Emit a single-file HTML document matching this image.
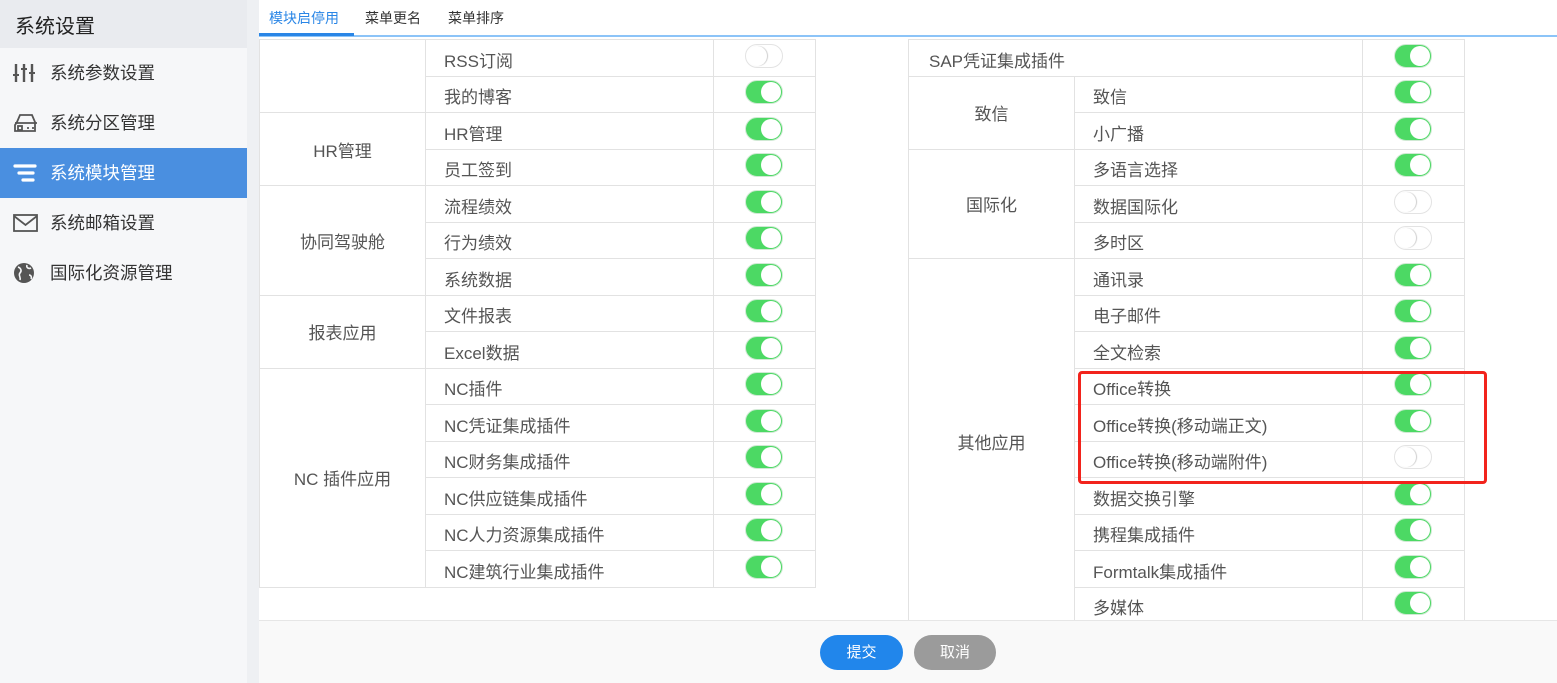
<!DOCTYPE html><html><head><meta charset="utf-8"><style>
*{box-sizing:border-box;margin:0;padding:0}
body{width:1557px;height:683px;overflow:hidden;font-family:"Liberation Sans","Noto Sans CJK SC",sans-serif;background:#eef0f3;position:relative}
.side{position:absolute;left:0;top:0;width:247px;height:683px;background:#f6f7f9}
.side .hd{height:48px;background:#e9ebef;font-size:20px;color:#222;padding:10px 0 0 15px}
.side .it{height:50px;font-size:17.5px;color:#333;padding-left:50px;line-height:50px;position:relative}
.side .it.on{background:#4a8fe0;color:#fff}
.side svg{position:absolute;left:13px;top:14px}
.main{position:absolute;left:259px;top:0;width:1298px;height:683px;background:#fff;overflow:hidden}
.tabs{height:37px;border-bottom:2px solid #8cc4f8;position:relative;font-size:14px;color:#333}
.tabs span{position:absolute;top:8px}
.tabs .a{color:#2a86e6}
.tabs .ul{position:absolute;left:0;top:33px;width:95px;height:3px;background:#2a86e6}
table{position:absolute;border-collapse:collapse;font-size:17px;color:#555;table-layout:fixed}
td{border:1px solid #e2e2e2;height:36.5px;padding:3px 0 0 18px;white-space:nowrap}
td.g{text-align:center;padding:0}
td.t{padding:0}
.sw{display:block;width:38px;height:24px;border-radius:12px;margin-left:31px;margin-top:-4px;background:#4cd964;position:relative;border:1px solid #cfe9d3}
.sw:after{content:"";position:absolute;right:1px;top:1px;width:20px;height:20px;border-radius:50%;background:#fff}
.sw.off{background:#fff;border:1px solid #e3e3e3}
.sw.off:after{left:1px;right:auto;box-shadow:1px 0 1px #ccc}
.foot{position:absolute;left:0;top:620px;width:1298px;height:63px;background:#f9f9f9;border-top:1px solid #e6e6e6;z-index:2}
.btn{position:absolute;top:14px;height:35px;width:83px;border-radius:18px;color:#fff;font-size:15px;text-align:center;line-height:35px}
.red{position:absolute;left:1078px;top:371px;width:409px;height:113px;border:3px solid #f2231c;border-radius:4px;z-index:3}
</style></head><body>
<div class="side">
<div class="hd">系统设置</div>
<div class="it"><svg width="24" height="22" viewBox="0 0 24 22" fill="none" stroke="#555" stroke-width="2.4"><path d="M3 2v18M11 2v18M19 2v18"/><path d="M0 13h6M8 7h6M16 11h6" stroke-width="2"/></svg>系统参数设置</div>
<div class="it"><svg width="26" height="22" viewBox="0 0 26 22" fill="none" stroke="#555" stroke-width="1.8"><path d="M4 10l3-7h12l3 7v9H2v-6z"/><path d="M2 11h22"/><rect x="5" y="14" width="4" height="4"/><path d="M14 16h2M19 16h2"/></svg>系统分区管理</div>
<div class="it on"><svg width="24" height="22" viewBox="0 0 24 22" stroke="#fff" stroke-width="3.2" stroke-linecap="round"><path d="M2 4h20M6 11h14M10 18h10"/></svg>系统模块管理</div>
<div class="it"><svg width="26" height="22" viewBox="0 0 26 22" fill="none" stroke="#555" stroke-width="1.8"><rect x="1" y="3" width="23" height="16"/><path d="M1 4l11.5 9L24 4"/></svg>系统邮箱设置</div>
<div class="it"><svg width="24" height="22" viewBox="0 0 24 22"><circle cx="11" cy="11" r="10" fill="#555"/><path d="M5 5c3 1 4 4 2 6s1 4 0 7M14 3c-1 3 2 4 4 3M16 13c2 0 3 2 2 4" stroke="#f6f7f9" stroke-width="1.6" fill="none"/></svg>国际化资源管理</div>
</div>
<div class="main">
<div class="tabs"><span class="a" style="left:10px">模块启停用</span><span style="left:106px">菜单更名</span><span style="left:189px">菜单排序</span><div class="ul"></div></div>
<table style="left:0;top:39px;width:556px"><colgroup><col style="width:166px"><col style="width:288px"><col style="width:102px"></colgroup>
<tr><td class="g" rowspan="2"></td><td>RSS订阅</td><td class="t"><i class="sw off"></i></td></tr>
<tr><td>我的博客</td><td class="t"><i class="sw"></i></td></tr>
<tr><td class="g" rowspan="2">HR管理</td><td>HR管理</td><td class="t"><i class="sw"></i></td></tr>
<tr><td>员工签到</td><td class="t"><i class="sw"></i></td></tr>
<tr><td class="g" rowspan="3">协同驾驶舱</td><td>流程绩效</td><td class="t"><i class="sw"></i></td></tr>
<tr><td>行为绩效</td><td class="t"><i class="sw"></i></td></tr>
<tr><td>系统数据</td><td class="t"><i class="sw"></i></td></tr>
<tr><td class="g" rowspan="2">报表应用</td><td>文件报表</td><td class="t"><i class="sw"></i></td></tr>
<tr><td>Excel数据</td><td class="t"><i class="sw"></i></td></tr>
<tr><td class="g" rowspan="6">NC 插件应用</td><td>NC插件</td><td class="t"><i class="sw"></i></td></tr>
<tr><td>NC凭证集成插件</td><td class="t"><i class="sw"></i></td></tr>
<tr><td>NC财务集成插件</td><td class="t"><i class="sw"></i></td></tr>
<tr><td>NC供应链集成插件</td><td class="t"><i class="sw"></i></td></tr>
<tr><td>NC人力资源集成插件</td><td class="t"><i class="sw"></i></td></tr>
<tr><td>NC建筑行业集成插件</td><td class="t"><i class="sw"></i></td></tr>
</table>
<table style="left:649px;top:39px;width:556px"><colgroup><col style="width:166px"><col style="width:288px"><col style="width:102px"></colgroup>
<tr><td colspan="2" style="padding-left:20px">SAP凭证集成插件</td><td class="t"><i class="sw"></i></td></tr>
<tr><td class="g" rowspan="2">致信</td><td>致信</td><td class="t"><i class="sw"></i></td></tr>
<tr><td>小广播</td><td class="t"><i class="sw"></i></td></tr>
<tr><td class="g" rowspan="3">国际化</td><td>多语言选择</td><td class="t"><i class="sw"></i></td></tr>
<tr><td>数据国际化</td><td class="t"><i class="sw off"></i></td></tr>
<tr><td>多时区</td><td class="t"><i class="sw off"></i></td></tr>
<tr><td class="g" rowspan="10">其他应用</td><td>通讯录</td><td class="t"><i class="sw"></i></td></tr>
<tr><td>电子邮件</td><td class="t"><i class="sw"></i></td></tr>
<tr><td>全文检索</td><td class="t"><i class="sw"></i></td></tr>
<tr><td>Office转换</td><td class="t"><i class="sw"></i></td></tr>
<tr><td>Office转换(移动端正文)</td><td class="t"><i class="sw"></i></td></tr>
<tr><td>Office转换(移动端附件)</td><td class="t"><i class="sw off"></i></td></tr>
<tr><td>数据交换引擎</td><td class="t"><i class="sw"></i></td></tr>
<tr><td>携程集成插件</td><td class="t"><i class="sw"></i></td></tr>
<tr><td>Formtalk集成插件</td><td class="t"><i class="sw"></i></td></tr>
<tr><td>多媒体</td><td class="t"><i class="sw"></i></td></tr>
</table>
<div class="foot"><div class="btn" style="left:561px;background:#2186eb">提交</div><div class="btn" style="left:655px;width:82px;background:#9b9b9b">取消</div></div>
</div>
<div class="red"></div>
</body></html>
